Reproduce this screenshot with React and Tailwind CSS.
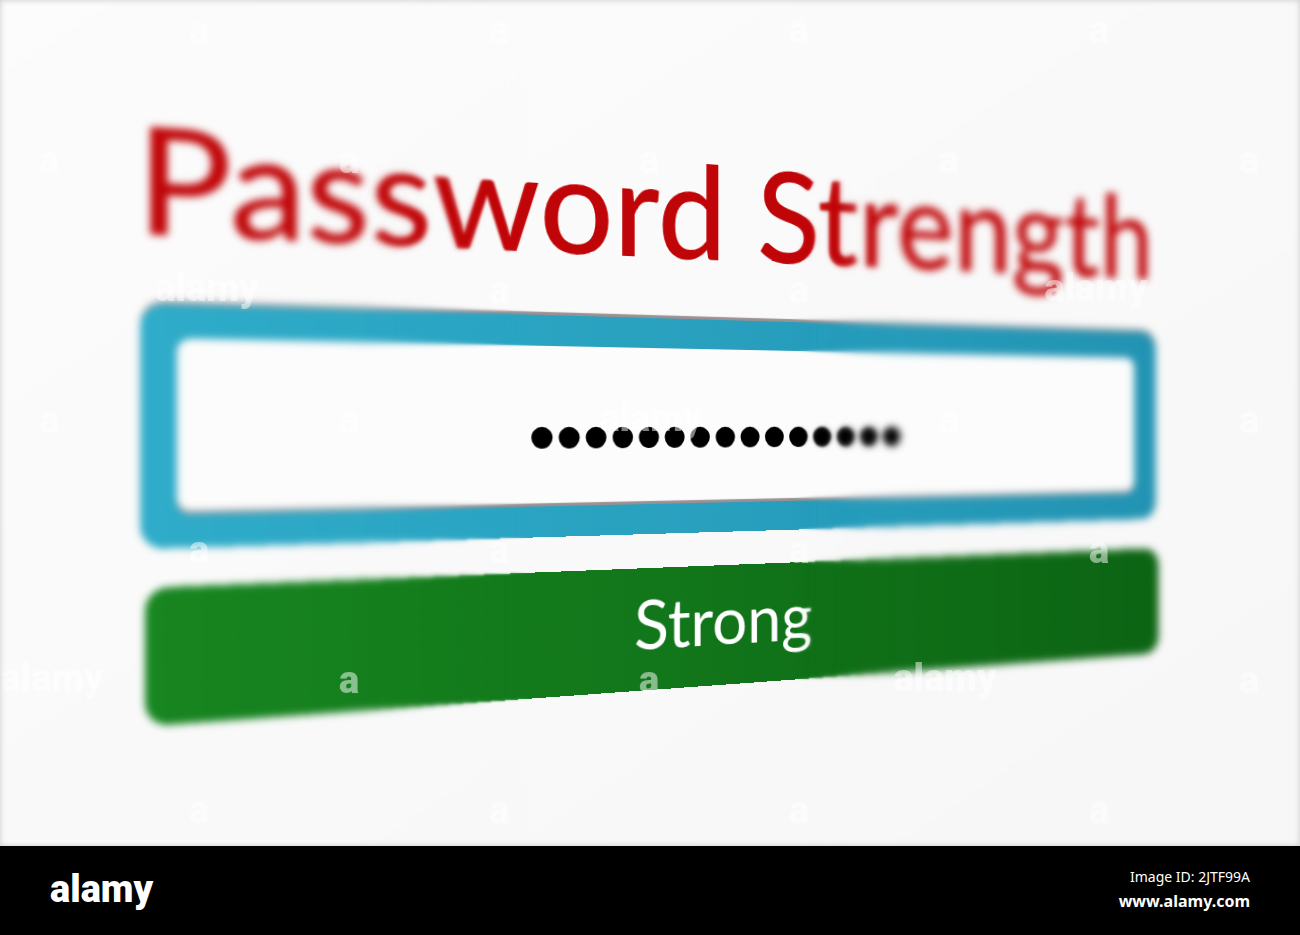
import { useState } from "react";

// faint single letters, staggered every other row
const marks = [
  [30, [199, 499, 799, 1099]],
  [160, [49, 349, 649, 949, 1249]],
  [290, [499, 799]],
  [420, [49, 349, 949, 1249]],
  [550, [199, 499, 799, 1099]],
  [680, [349, 649, 1249]],
  [810, [199, 499, 799, 1099]],
].flatMap(([y, xs]) => xs.map((x) => ({ x, y })));

const wordmarks = [
  { x: 207, y: 288 },
  { x: 651, y: 418 },
  { x: 1096, y: 288 },
  { x: 52, y: 678 },
  { x: 945, y: 678 },
];

function Watermark({ x, y, children }) {
  return (
    <span
      className="absolute -translate-x-1/2 -translate-y-1/2 text-[38px] leading-none font-black text-white/50"
      style={{ left: `${(x / 1300) * 100}%`, top: `${(y / 846) * 100}%` }}
    >
      {children}
    </span>
  );
}

function Watermarks() {
  return (
    <div
      aria-hidden="true"
      className="absolute inset-0 overflow-hidden pointer-events-none font-[Roboto,sans-serif]"
    >
      {marks.map((m) => (
        <Watermark key={`${m.x}-${m.y}`} x={m.x} y={m.y}>
          a
        </Watermark>
      ))}
      {wordmarks.map((m) => (
        <Watermark key={`${m.x}-${m.y}`} x={m.x} y={m.y}>
          alamy
        </Watermark>
      ))}
    </div>
  );
}

// out of focus on both sides, sharp in the middle
function DepthBlur() {
  return (
    <div aria-hidden="true" className="absolute inset-0 pointer-events-none">
      <div className="absolute inset-0 backdrop-blur-[1px] mask-[linear-gradient(to_right,black_38%,transparent_41%,transparent_61%,black_63%)]" />
      <div className="absolute inset-0 backdrop-blur-[2px] mask-[linear-gradient(to_right,black_34%,transparent_38%,transparent_62%,black_66%)]" />
      <div className="absolute inset-0 backdrop-blur-[3px] mask-[linear-gradient(to_right,black_28%,transparent_34%,transparent_64%,black_69%)]" />
    </div>
  );
}

export default function App() {
  const [password, setPassword] = useState("correct-horse-1");

  return (
    <div className="flex flex-col min-h-screen font-[Lato,sans-serif]">
      <main className="relative flex-1 flex flex-col overflow-hidden bg-linear-to-br from-[#fcfcfc] to-[#f7f7f7]">
        <div className="flex-1 flex flex-col perspective-[1200px]">
          <form
            className="flex-1 flex flex-col justify-center pl-[13.8%] pr-[2.6%] pb-4 rotate-y-18"
            onSubmit={(e) => e.preventDefault()}
          >
            <h1 className="mb-[46px] -ml-1 text-[132px] leading-none font-medium whitespace-nowrap text-[#c00508]">
              <label htmlFor="password">Password Strength</label>
            </h1>

            <div className="flex h-54 mb-[34px] p-[30px] rounded-[20px] bg-linear-to-r from-[#2eacc9] to-[#2293b3] shadow-[0_-3px_1px_#9a8f92]">
              <input
                id="password"
                type="password"
                className="w-full pt-5 pl-4 rounded-xl bg-[#fcfcfc] text-center text-[78px] leading-none text-black font-['Liberation_Sans',sans-serif] shadow-[inset_0_-3px_1px_#9a8f92] outline-none"
                value={password}
                onChange={(e) => setPassword(e.target.value)}
              />
            </div>

            <output
              htmlFor="password"
              className="flex items-center justify-center h-[122px] ml-1 -mr-1 pl-2 pb-3 rounded-[20px] bg-linear-to-r from-[#178520] to-[#0c6413] text-[68px] leading-none text-white"
            >
              Strong
            </output>
          </form>
        </div>

        <DepthBlur />
        <Watermarks />
        <div className="absolute inset-0 pointer-events-none shadow-[inset_0_0_6px_#c8c8c8]" />
      </main>

      <footer className="flex items-center justify-between h-[89px] px-[50px] pb-1 bg-black text-white">
        <span className="text-[38px] leading-none font-black font-[Roboto,sans-serif]">alamy</span>
        <div className="text-right font-['Noto_Sans',sans-serif]">
          <p className="text-sm leading-6">Image ID: 2JTF99A</p>
          <a href="#" className="block text-base leading-6 font-bold">
            www.alamy.com
          </a>
        </div>
      </footer>
    </div>
  );
}
